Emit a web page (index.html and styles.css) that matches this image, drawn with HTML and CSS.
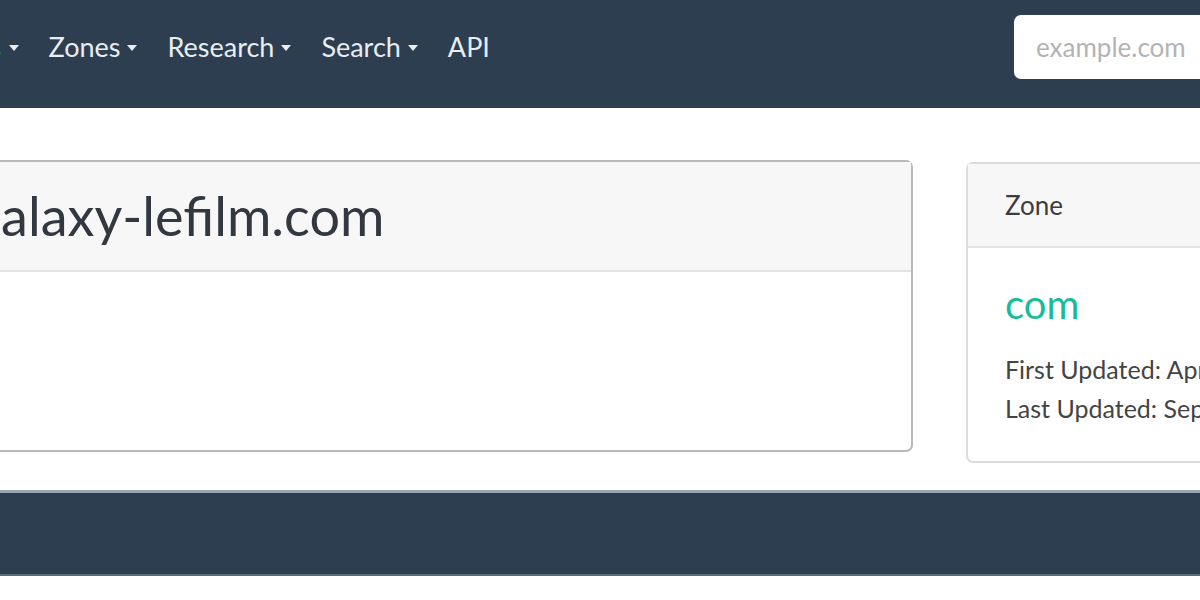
FILE: index.html
```html
<!DOCTYPE html>
<html lang="en">
<head>
<meta charset="utf-8">
<title>galaxy-lefilm.com</title>
<link rel="stylesheet" href="styles.css">
</head>
<body>
<nav class="navbar">
  <ul class="nav">
    <li class="nav-item nav-first"><a class="nav-link dropdown" href="#">Domains</a></li>
    <li class="nav-item"><a class="nav-link dropdown" href="#">Zones</a></li>
    <li class="nav-item"><a class="nav-link dropdown" href="#">Research</a></li>
    <li class="nav-item"><a class="nav-link dropdown" href="#">Search</a></li>
    <li class="nav-item"><a class="nav-link" href="#">API</a></li>
  </ul>
  <form class="search">
    <input class="search-input" type="text" placeholder="example.com">
  </form>
</nav>

<main class="main">
  <section class="card card-domain">
    <div class="card-header title-header">
      <h2 class="domain-title">galaxy-lefilm.com</h2>
    </div>
    <div class="card-body domain-body"></div>
  </section>
  <aside class="card card-zone">
    <div class="card-header zone-header">Zone</div>
    <div class="card-body zone-body">
      <h4 class="zone-name"><a href="#">com</a></h4>
      <p class="zone-line">First Updated: April 2019</p>
      <p class="zone-line">Last Updated: September 2023</p>
    </div>
  </aside>
</main>

<footer class="footer"></footer>
</body>
</html>
```
FILE: styles.css
```css
* { box-sizing: border-box; }

html, body {
  margin: 0;
  padding: 0;
}

body {
  width: 1200px;
  height: 600px;
  overflow: hidden;
  background: #ffffff;
  font-family: Lato, "Open Sans", "Liberation Sans", sans-serif;
  font-size: 27px;
  color: #2c3e50;
}

/* ---------- navbar ---------- */
.navbar {
  height: 108px;
  background: #2c3e50;
  display: flex;
  align-items: flex-start;
  padding-top: 15px;
}

.nav {
  list-style: none;
  margin: 0 0 0 -118px;
  padding: 0;
  display: flex;
  height: 64px;
  align-items: center;
}

.nav-link {
  display: flex;
  align-items: center;
  padding: 0 15px;
  color: #e9edf1;
  text-decoration: none;
  font-size: 27px;
  line-height: 64px;
}

.nav-first .nav-link { color: #18bc9c; }

.dropdown::after {
  content: "";
  display: inline-block;
  margin-left: 7px;
  margin-top: 2px;
  border-top: 6px solid #e9edf1;
  border-left: 5px solid transparent;
  border-right: 5px solid transparent;
}

.search {
  margin-left: auto;
  margin-right: -76px;
  flex-shrink: 0;
}

.search-input {
  width: 262px;
  height: 64px;
  border: 0;
  border-radius: 7px;
  padding: 0 22px;
  font-family: Lato, "Open Sans", "Liberation Sans", sans-serif;
  font-size: 26px;
  background: #fff;
  color: #333;
  outline: none;
}

.search-input::placeholder { color: #b3b3b3; }

/* ---------- main ---------- */
.main {
  display: flex;
  align-items: flex-start;
  gap: 53px;
  margin-top: 52px;
  margin-left: -66px;
}

.card {
  background: #fff;
  border-radius: 7px;
  flex-shrink: 0;
}

.card-domain {
  width: 979px;
  border: 2px solid #b9b9b9;
}

.card-zone {
  width: 380px;
  margin-top: 2px;
  border: 2px solid #dcdcdc;
}

.card-header {
  background: #f7f7f7;
  border-bottom: 2px solid #e4e4e4;
}

.title-header {
  padding: 22px 37px;
  height: 110px;
}

.domain-title {
  margin: 0;
  font-weight: 400;
  font-size: 54px;
  line-height: 64px;
  color: #333840;
}

.domain-body { height: 178px; }

.zone-header {
  height: 84px;
  padding: 0 37px;
  display: flex;
  align-items: center;
  font-size: 26px;
  color: #3c3c3c;
}

.zone-body {
  padding: 32px 37px 33px;
}

.zone-name {
  margin: 0 0 22px;
  font-weight: 400;
  font-size: 40px;
  line-height: 48px;
}

.zone-name a {
  color: #18bc9c;
  text-decoration: none;
}

.zone-line {
  margin: 0;
  font-size: 25px;
  line-height: 39px;
  color: #444;
  white-space: nowrap;
}

/* ---------- footer ---------- */
.footer {
  margin-top: 27px;
  height: 86px;
  background: #2c3e50;
  border-top: 3px solid #9aa6b2;
  border-bottom: 2px solid #5f6c79;
}
```
